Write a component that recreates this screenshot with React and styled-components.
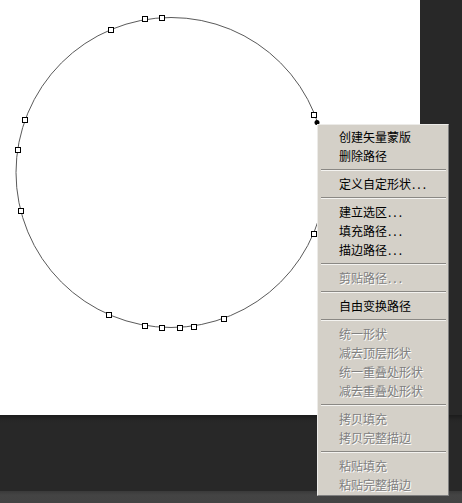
import React from "react";
import styled, { createGlobalStyle } from "styled-components";

const Global = createGlobalStyle`
  html, body { margin: 0; padding: 0; background: #282828; }
  body { width: 462px; height: 503px; overflow: hidden; }
`;

const Page = styled.div`
  position: relative;
  width: 462px;
  height: 503px;
  display: flex;
  flex-direction: column;
  background: #282828;
`;

const TopRow = styled.div`
  display: flex;
  height: 415px;
`;

const Canvas = styled.div`
  width: 420px;
  height: 415px;
  background: #ffffff;
`;

const Pasteboard = styled.div`
  flex: 1;
  background: #282828;
`;

const Gutter = styled.div`
  height: 76px;
  background: linear-gradient(#1c1c1c 0px, #262626 5px, #282828 8px, #282828 100%);
`;

const StatusBar = styled.div`
  flex: 1;
  background: linear-gradient(#3a3a3a, #444444 4px, #434343);
`;

const Menu = styled.div`
  position: absolute;
  left: 317px;
  top: 124px;
  width: 130px;
  padding: 2px 0 1px 0;
  background: #d4d0c8;
  border: 1px solid;
  border-color: #ecebe8 #808080 #808080 #ecebe8;
  display: flex;
  flex-direction: column;
  font-family: "Noto Sans CJK SC", "Noto Sans", sans-serif;
  font-size: 12px;
`;

const Item = styled.div`
  height: 19px;
  line-height: 19px;
  padding-left: 21px;
  white-space: nowrap;
  color: ${(p) => (p.$disabled ? "#808080" : "#000000")};
  text-shadow: ${(p) => (p.$disabled ? "1px 1px 0 #ffffff" : "none")};
`;

const Dots = styled.span`
  letter-spacing: 2px;
  margin-left: 1px;
`;

const Sep = styled.div`
  height: 9px;
  display: flex;
  align-items: center;
  padding: 0 2px 0 3px;
  &::before {
    content: "";
    flex: 1;
    height: 1px;
    background: #8a8884;
    border-bottom: 1px solid #f4f3f0;
  }
`;

const anchors = [
  [111, 30], [145, 19], [162, 18], [25, 120], [18, 150], [21, 211],
  [109, 315], [145, 326], [162, 328], [180, 328], [194, 327], [224, 319],
  [314, 234], [314, 115],
];

const PathDrawing = () => (
  <svg width="420" height="415" viewBox="0 0 420 415">
    <circle cx="171" cy="172.5" r="155" fill="none" stroke="#5a5a5a" strokeWidth="1" />
    {anchors.map(([x, y], i) => (
      <rect key={i} x={x - 2.5} y={y - 2.5} width="5" height="5" fill="#fff" stroke="#000" strokeWidth="1" />
    ))}
    <circle cx="317" cy="122.5" r="2.5" fill="#000" />
  </svg>
);

const groups = [
  [{ t: "创建矢量蒙版" }, { t: "删除路径" }],
  [{ t: "定义自定形状", d: true }],
  [{ t: "建立选区", dots: true }, { t: "填充路径", dots: true }, { t: "描边路径", dots: true }],
  [{ t: "剪贴路径", dots: true, off: true }],
  [{ t: "自由变换路径" }],
  [{ t: "统一形状", off: true }, { t: "减去顶层形状", off: true }, { t: "统一重叠处形状", off: true }, { t: "减去重叠处形状", off: true }],
  [{ t: "拷贝填充", off: true }, { t: "拷贝完整描边", off: true }],
  [{ t: "粘贴填充", off: true }, { t: "粘贴完整描边", off: true }],
];

export default function App() {
  return (
    <>
      <Global />
      <Page>
        <TopRow>
          <Canvas>
            <PathDrawing />
          </Canvas>
          <Pasteboard />
        </TopRow>
        <Gutter />
        <StatusBar />
        <Menu>
          {groups.map((g, gi) => (
            <React.Fragment key={gi}>
              {gi > 0 && <Sep />}
              {g.map((it, ii) => (
                <Item key={ii} $disabled={it.off}>
                  {it.t}
                  {(it.dots || it.d) && <Dots>...</Dots>}
                </Item>
              ))}
            </React.Fragment>
          ))}
        </Menu>
      </Page>
    </>
  );
}
